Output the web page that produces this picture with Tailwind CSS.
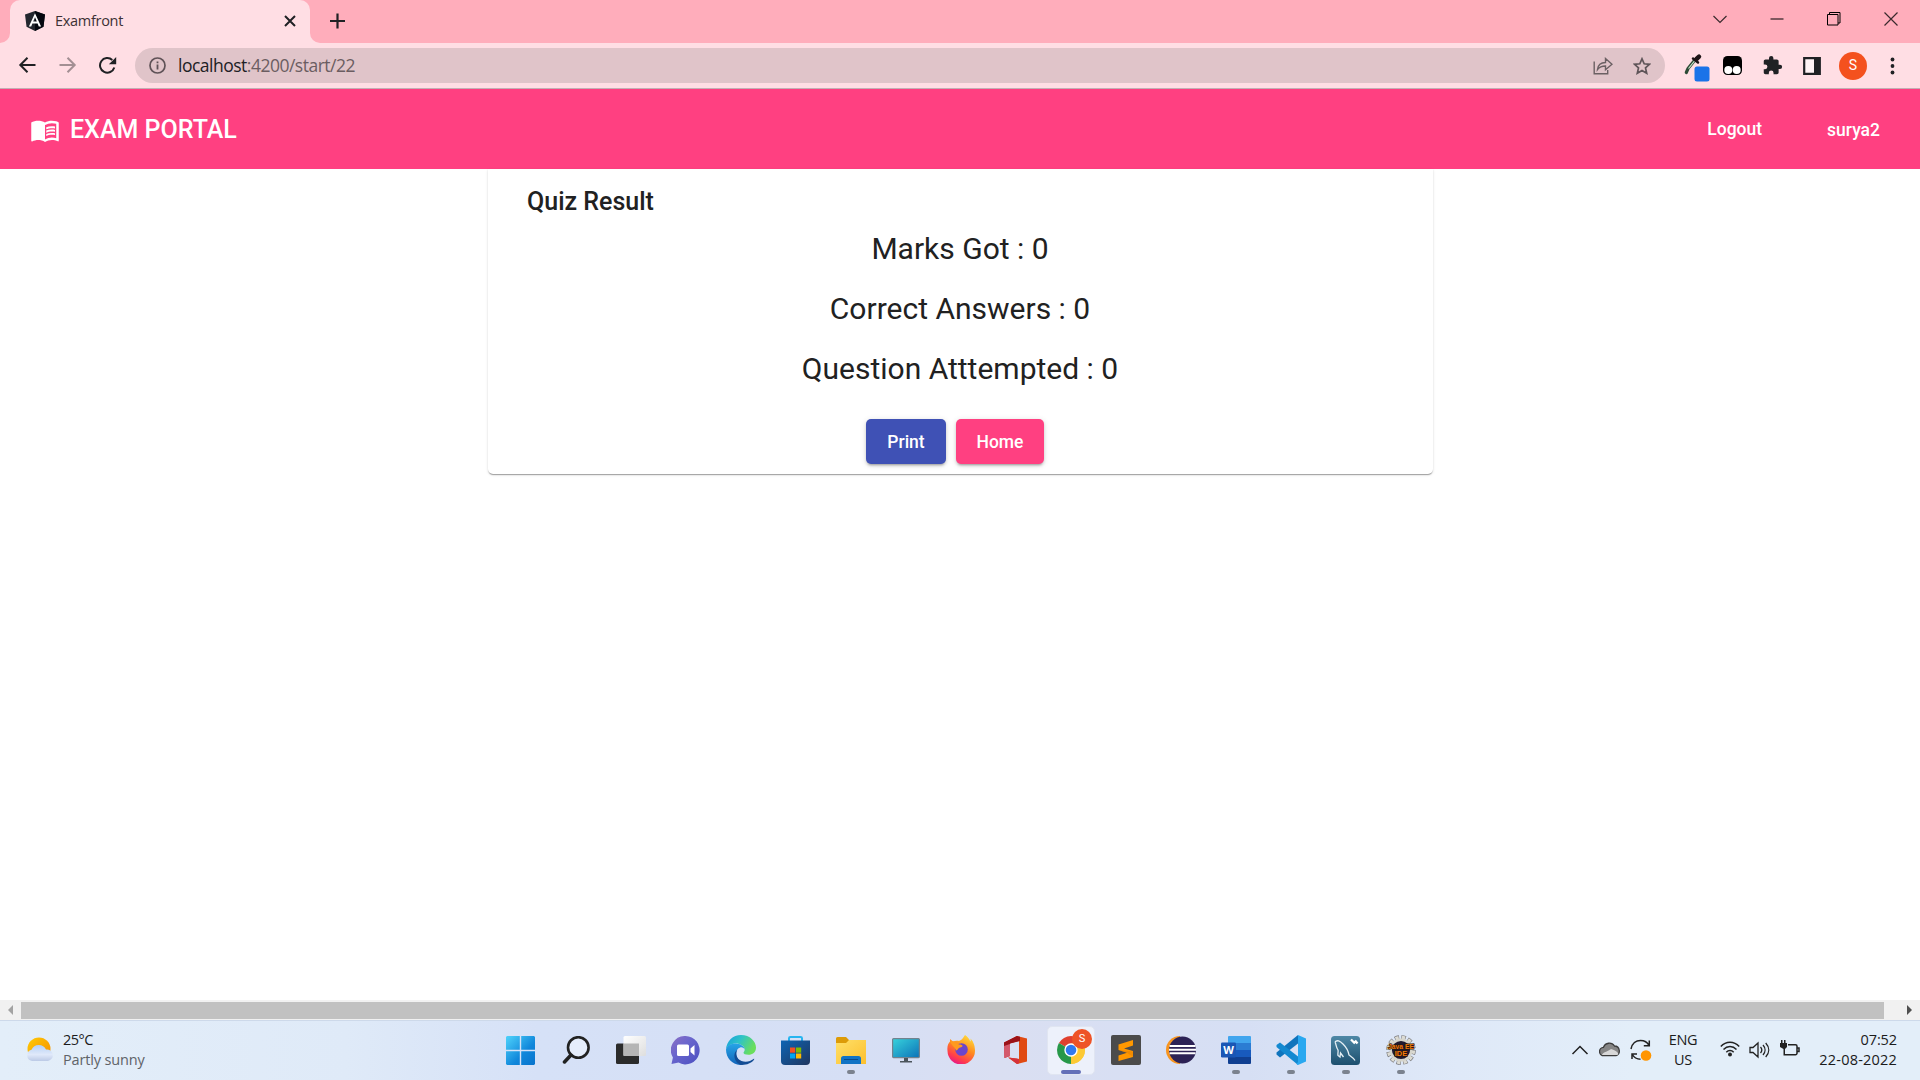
<!DOCTYPE html>
<html lang="en">
<head>
<meta charset="utf-8">
<title>Examfront</title>
<script src="https://cdn.jsdelivr.net/npm/@tailwindcss/browser@4"></script>
</head>
<body class="w-[1920px] h-[1080px] overflow-hidden flex flex-col bg-white font-['Open_Sans','Noto_Sans',sans-serif]">

<!-- Tab strip -->
<div class="h-[43px] shrink-0 bg-[#ffadbb] flex">
  <svg class="w-[10px] h-[43px] shrink-0" viewBox="0 0 10 43"><path d="M10 33v10H0A10 10 0 0 0 10 33z" fill="#ffdee4"/></svg>
  <div class="w-[300px] h-[43px] shrink-0 bg-[#ffdee4] rounded-t-[10px] flex items-center pl-[15px] pr-[14px]">
    <svg class="w-5 h-5 shrink-0 mb-[1px]" viewBox="0 0 20 20"><path d="M10 0l10 3.400-1.500 12.400L10 20l-8.500-4.200L0 3.400z" fill="#23262e"/><path d="M10 0l10 3.400-1.500 12.400L10 20z" fill="#05070f"/><path d="M10 2.200L3.900 15.500h2.300l1.200-3h5.200l1.200 3h2.300zm1.800 8.400H8.200L10 6.300z" fill="#fff"/></svg>
    <span class="ml-[10px] mb-[2px] text-[14.500px] tracking-[-0.3px] text-[#3c3134] grow">Examfront</span>
    <svg class="w-[12px] h-[12px] mb-[1px]" viewBox="0 0 12 12" stroke="#202124" stroke-width="2"><path d="M1 1l10 10M11 1L1 11"/></svg>
  </div>
  <svg class="w-[10px] h-[43px] shrink-0" viewBox="0 0 10 43"><path d="M0 33v10h10A10 10 0 0 1 0 33z" fill="#ffdee4"/></svg>
  <svg class="w-4 h-4 ml-[9px] mt-[13px]" viewBox="0 0 16 16" stroke="#202124" stroke-width="2.200"><path d="M8.500 .5v15M1 8h15"/></svg>
  <div class="ml-auto flex h-[37px] items-center pr-[22px] gap-[43px]">
    <svg class="w-[14px] h-[14px]" viewBox="0 0 14 14" fill="none" stroke="#3a2a2d" stroke-width="1.200"><path d="M.5 4L7 10.500 13.500 4"/></svg>
    <svg class="w-[14px] h-[14px]" viewBox="0 0 14 14"><path d="M.5 6.500h13v1H.5z"/></svg>
    <svg class="w-[14px] h-[14px]" viewBox="0 0 14 14" fill="none" stroke="#000"><path d="M.5 2.500h10.500v10.500H.5zM2.500 2.500V.5h10.500V11h-2"/></svg>
    <svg class="w-[14px] h-[14px]" viewBox="0 0 14 14" fill="none" stroke="#3a2a2d" stroke-width="1.200"><path d="M.5.5l13 13M13.500.5l-13 13"/></svg>
  </div>
</div>

<!-- Browser toolbar -->
<div class="h-[46px] shrink-0 bg-[#ffdee4] border-b border-[#c4aeb4] flex items-center pl-[18px] pr-[19px]">
  <svg class="w-[18px] h-[18px] mb-[1px]" viewBox="0 0 18 18" fill="none" stroke="#202124" stroke-width="2"><path d="M17.500 9H2.500M9.500 1.800L2.300 9l7.200 7.200"/></svg>
  <svg class="w-[18px] h-[18px] ml-[23px] mb-[1px]" viewBox="0 0 18 18" fill="none" stroke="#a38f93" stroke-width="2"><path d="M.5 9h15M8.500 1.800L15.700 9l-7.200 7.200"/></svg>
  <svg class="w-[19px] h-[18px] ml-[21px] mb-[1px]" viewBox="0 0 19 18"><path d="M16.300 11.500A7.300 7.300 0 1 1 14.300 4" fill="none" stroke="#202124" stroke-width="2"/><path d="M18.200 1v7.300h-7.300z" fill="#202124"/></svg>
  <div class="ml-[18px] w-[1530px] h-[35px] rounded-full bg-[#e0c4c9] flex items-center pl-[14px] pr-[14px]">
    <svg class="w-[17px] h-[17px]" viewBox="0 0 17 17"><circle cx="8.500" cy="8.500" r="7.500" fill="none" stroke="#5f5257" stroke-width="1.700"/><path d="M7.600 7.500h1.800v5H7.600zM7.600 4.400h1.800v1.800H7.600z" fill="#5f5257"/></svg>
    <span class="ml-[12px] text-[17.500px] tracking-[-0.5px] text-[#6b5d61]"><span class="text-[#202124]">localhost</span>:4200/start/22</span>
    <svg class="w-5 h-[18px] ml-auto" viewBox="0 0 20 18" fill="none" stroke="#6b6063" stroke-width="1.400"><path d="M1.200 4.500v12.300h13.500V13M4.500 12.500c.5-4.500 3.500-7 8-7V1.500l6.500 5.700-6.500 5.600V9c-3.500 0-6 .8-8 3.500z"/></svg>
    <svg class="w-[18px] h-[18px] ml-[20px]" viewBox="0 0 18 18" fill="none" stroke="#5f5559" stroke-width="1.700"><path d="M9 1.800l2.200 5 5.300.5-4 3.600 1.200 5.300L9 13.400l-4.700 2.800 1.200-5.300-4-3.600 5.300-.5z"/></svg>
  </div>
  <div class="ml-auto flex items-center h-full">
    <svg class="w-[25px] h-[28px] mt-[5px] overflow-visible" viewBox="0 0 25 28"><path d="M9.500 6.500L3 14.500 1.300 18.500" stroke="#2d4a35" stroke-width="3.200" fill="none" stroke-linecap="round"/><path d="M9.500 7L3.500 14.500" stroke="#c9e8cd" stroke-width="1.200"/><path d="M8 4.500l5 4" stroke="#1d1416" stroke-width="2.500" stroke-linecap="round"/><path d="M11.500 5l2.500-2.300" stroke="#1d1416" stroke-width="4.500" stroke-linecap="round"/><rect x="9.500" y="12.500" width="15" height="15" rx="2.500" fill="#1a73e8"/></svg>
    <svg class="w-[19px] h-[19px] ml-[13px]" viewBox="0 0 19 19"><rect width="19" height="19" rx="4.500" fill="#000"/><circle cx="5.300" cy="13.900" r="4" fill="#fff"/><circle cx="13.700" cy="13.900" r="4" fill="#fff"/></svg>
    <svg class="w-[21px] h-[21px] ml-[20px]" viewBox="0 0 24 24" fill="#202124"><path d="M20.500 11H19V7c0-1.100-.9-2-2-2h-4V3.500a2.500 2.500 0 0 0-5 0V5H4c-1.100 0-2 .9-2 2v3.800h1.500a2.700 2.700 0 0 1 0 5.400H2V20c0 1.100.9 2 2 2h3.800v-1.500a2.700 2.700 0 0 1 5.400 0V22H17c1.100 0 2-.9 2-2v-4h1.500a2.500 2.500 0 0 0 0-5z"/></svg>
    <svg class="w-[18px] h-[18px] ml-[20px]" viewBox="0 0 18 18"><path d="M1.200 1.200h15.600v15.600H1.200z" fill="#fff3f5" stroke="#202124" stroke-width="2.200"/><path d="M11 1h6v16h-6z" fill="#202124"/></svg>
    <div class="w-7 h-7 rounded-full bg-[#f4511e] ml-[18px] text-white text-[14px] flex items-center justify-center font-['Roboto',sans-serif]">S</div>
    <svg class="w-4 h-[18px] ml-[18px]" viewBox="0 0 16 18" fill="#202124"><circle cx="7.500" cy="2.500" r="1.900"/><circle cx="7.500" cy="9" r="1.900"/><circle cx="7.500" cy="15.500" r="1.900"/></svg>
  </div>
</div>

<!-- Application header -->
<header class="h-20 shrink-0 bg-[#ff4081] text-white flex items-center px-[30px] font-['Roboto',sans-serif] font-medium">
  <svg class="w-[30px] h-[30px] mt-[2px]" viewBox="0 0 24 24" fill="#fff"><path d="M21 5c-1.110-.35-2.330-.5-3.500-.5-1.950 0-4.050.4-5.500 1.500-1.450-1.100-3.550-1.500-5.500-1.500S2.450 4.900 1 6v14.650c0 .25.25.5.5.5.1 0 .15-.05.25-.05C3.100 20.450 5.050 20 6.500 20c1.950 0 4.050.4 5.500 1.500 1.350-.85 3.800-1.500 5.500-1.500 1.650 0 3.350.3 4.750 1.050.1.050.15.050.25.050.25 0 .5-.25.5-.5V6c-.6-.45-1.250-.75-2-1zm0 13.500c-1.100-.35-2.300-.5-3.500-.5-1.700 0-4.150.65-5.500 1.500V8c1.350-.85 3.800-1.500 5.500-1.500 1.200 0 2.400.15 3.500.5v11.500z"/><path d="M17.500 10.500c.88 0 1.730.09 2.500.26V9.240c-.79-.15-1.640-.24-2.500-.24-1.700 0-3.240.29-4.500.83v1.660c1.130-.64 2.700-.99 4.500-.99zM13 12.490v1.660c1.130-.64 2.700-.99 4.500-.99.88 0 1.730.09 2.500.26V11.900c-.79-.15-1.640-.24-2.500-.24-1.700 0-3.240.3-4.500.83zM17.500 14.330c-1.700 0-3.240.29-4.500.83v1.660c1.130-.64 2.700-.99 4.500-.99.88 0 1.730.09 2.500.26v-1.520c-.79-.16-1.640-.24-2.500-.24z"/></svg>
  <h1 class="ml-[10px] mt-[2px] text-[25px]">EXAM PORTAL</h1>
  <span class="ml-auto text-[17.500px]">Logout</span>
  <span class="ml-[65px] mr-[10px] mt-[2px] text-[17.500px]">surya2</span>
</header>

<!-- Page -->
<main class="grow flex justify-center items-start font-['Roboto',sans-serif] text-[#212121]">
  <section class="w-[945px] h-[305px] ml-px rounded-b-[5px] shadow-[0_2px_1px_-1px_rgba(0,0,0,0.2),0_1px_1px_0_rgba(0,0,0,0.14),0_1px_3px_0_rgba(0,0,0,0.12)]">
    <h2 class="pt-[17px] pl-[39px] text-[25px] leading-8 font-medium">Quiz Result</h2>
    <div class="mt-[11px] pr-px text-center text-[30px] leading-10 flex flex-col gap-5">
      <p>Marks Got : 0</p>
      <p>Correct Answers : 0</p>
      <p>Question Atttempted : 0</p>
    </div>
    <div class="mt-[30px] flex justify-center gap-[10px] pr-[11px] text-white text-[17.500px] font-medium">
      <button class="w-20 h-[45px] pt-[2px] rounded-[5px] bg-[#3f51b5] shadow-[0_3px_2px_-2px_rgba(0,0,0,0.2),0_2px_3px_0_rgba(0,0,0,0.14),0_1px_6px_0_rgba(0,0,0,0.12)]">Print</button>
      <button class="w-[88px] h-[45px] pt-[2px] rounded-[5px] bg-[#ff4081] shadow-[0_3px_2px_-2px_rgba(0,0,0,0.2),0_2px_3px_0_rgba(0,0,0,0.14),0_1px_6px_0_rgba(0,0,0,0.12)]">Home</button>
    </div>
  </section>
</main>

<!-- Horizontal scrollbar -->
<div class="h-5 shrink-0 bg-[#f1f1f1] flex items-center justify-between px-2">
  <svg class="w-[5px] h-[10px]" viewBox="0 0 5 10"><path d="M5 0v10L0 5z" fill="#a3a3a3"/></svg>
  <div class="w-[1863px] h-[17px] mt-[1px] bg-[#c1c1c1] ml-2 mr-auto"></div>
  <svg class="w-[5px] h-[10px]" viewBox="0 0 5 10"><path d="M0 0v10l5-5z" fill="#505050"/></svg>
</div>

<!-- Taskbar -->
<footer class="h-[60px] shrink-0 border-t border-[#cdd9ea] bg-[linear-gradient(90deg,#e3eef9_0%,#dfeaf8_18%,#d6e1f7_28%,#d6dff5_45%,#dadff2_52%,#d6dff4_65%,#dfe9f8_76%,#e3eef9_85%)] flex items-center">
  <div class="w-[493px] flex items-center pl-[26px] pb-[1px] text-[14.500px] leading-5">
    <svg class="w-7 h-[26px] mb-[3px]" viewBox="0 0 28 26"><defs><linearGradient id="sun" x1="0" y1="0" x2="1" y2="1"><stop offset="0" stop-color="#ffcb05"/><stop offset="1" stop-color="#f58b00"/></linearGradient><linearGradient id="cloud" x1="0" y1="0" x2="0" y2="1"><stop offset="0" stop-color="#b4d0f5"/><stop offset=".6" stop-color="#e0e9fa"/><stop offset="1" stop-color="#bccae6"/></linearGradient></defs><circle cx="13" cy="13" r="11.500" fill="url(#sun)"/><path d="M6 25a5.800 5.800 0 0 1-.5-11.300A8 8 0 0 1 20 13.500 5.800 5.800 0 0 1 22 25z" fill="url(#cloud)"/></svg>
    <div class="ml-[9px]"><p class="text-[#1b1b1b] tracking-[-0.5px]">25°C</p><p class="text-[#5f6368] tracking-[-0.15px]">Partly sunny</p></div>
  </div>

  <nav class="flex h-full w-[935px]">
    <div class="w-[55px] pb-px relative flex items-center justify-center"><svg class="w-[29px] h-[29px]" viewBox="0 0 29 29"><defs><linearGradient id="win" x1="0" y1="0" x2="1" y2="1"><stop offset="0" stop-color="#4fd3fb"/><stop offset=".6" stop-color="#1087db"/><stop offset="1" stop-color="#0873cc"/></linearGradient></defs><path d="M1 0h12.800v13.800H0V1zM15.200 0H28l1 1v12.800H15.200zM0 15.200h13.800V29H1l-1-1zM15.200 15.200H29V28l-1 1H15.200z" fill="url(#win)"/></svg></div>

    <div class="w-[55px] pb-px relative flex items-center justify-center"><svg class="w-7 h-7" viewBox="0 0 28 28" fill="none" stroke="#222" stroke-linecap="round"><circle cx="16.300" cy="11.500" r="10.300" stroke-width="2.600" fill="#e5edfb"/><path d="M9 19l-6.500 7" stroke-width="3.500"/></svg></div>

    <div class="w-[55px] pb-px relative flex items-center justify-center"><svg class="w-[30px] h-[28px]" viewBox="0 0 30 28"><defs><linearGradient id="tv" x1="0" y1="0" x2="1" y2="1"><stop offset="0" stop-color="#fff"/><stop offset="1" stop-color="#dedede"/></linearGradient></defs><rect y="7.500" width="23" height="20.500" rx="1.500" fill="#2b2b2b"/><rect x="7.500" width="22.500" height="20" rx="1.500" fill="url(#tv)"/><path d="M7.500 7.500H23V20H7.500z" fill="#b5b5b5"/></svg></div>

    <div class="w-[55px] pb-px relative flex items-center justify-center"><svg class="w-[29px] h-[29px]" viewBox="0 0 29 29"><defs><linearGradient id="chat" x1="0" y1="0" x2="1" y2="1"><stop offset="0" stop-color="#8d6fc4"/><stop offset=".4" stop-color="#6a66cd"/><stop offset="1" stop-color="#4b4fc0"/></linearGradient></defs><path d="M14.500 0a14.200 14.200 0 1 1-7 26.600L.5 28l1.400-6.500A14.200 14.200 0 0 1 14.500 0z" fill="url(#chat)"/><rect x="6" y="8.500" width="12" height="11.500" rx="1.500" fill="#fff"/><path d="M19.500 12.500l4-3.500v10.500l-4-3.500z" fill="#fff"/></svg></div>

    <div class="w-[55px] pb-px relative flex items-center justify-center"><svg class="w-[30px] h-[30px]" viewBox="0 0 30 30"><defs><linearGradient id="ed1" x1="0" y1="0" x2="1" y2=".4"><stop offset="0" stop-color="#159ee0"/><stop offset=".5" stop-color="#2fc3c6"/><stop offset="1" stop-color="#6ade5c"/></linearGradient><linearGradient id="ed2" x1="0" y1="0" x2="0" y2="1"><stop offset="0" stop-color="#27a5e8"/><stop offset="1" stop-color="#1263b8"/></linearGradient></defs><path d="M0 14.500C.5 6 7 0 15 0c9 0 15 6.500 15 12.500 0 5-3.500 7.300-7.500 7.300-3.300 0-5-1-5-2 0-.8 1.200-1.300 1.200-3.300C18.700 11 14 8.500 10 8.500 5 8.500 1.500 11 0 14.500z" fill="url(#ed1)"/><path d="M0 14.500c1-4 5-6 9.500-6 5 0 9.200 3 9.200 6-1-2-3-2.500-4.500-2-3 1-4.700 4-3.700 8C11.500 25 16 29.500 16 30 7 30.500 0 23.500 0 14.500z" fill="url(#ed2)"/><path d="M11.500 14.500c-2.500 4-1 9.500 4 11.500 4.500 1.800 9 .3 12-2 .8-.5 1 0 .5.8C25.500 28 21 30 16 30 9 29 5.500 19 11.500 14.500z" fill="#134c94"/></svg></div>

    <div class="w-[55px] pb-px relative flex items-center justify-center"><svg class="w-[29px] h-[30px]" viewBox="0 0 29 30"><defs><linearGradient id="store" x1="0" y1="0" x2="1" y2="1"><stop offset="0" stop-color="#0d64b4"/><stop offset="1" stop-color="#20365f"/></linearGradient></defs><path d="M8 6V3.300C8 2.300 8.700 2 9.500 2h10c1 0 1.500.5 1.500 1.300V6" fill="none" stroke="#27b5f0" stroke-width="2"/><path d="M0 5.500h29V26a4 4 0 0 1-4 4H4a4 4 0 0 1-4-4z" fill="url(#store)"/><path d="M9 12.500h5.200v5.200H9z" fill="#f25022"/><path d="M15 12.500h5.200v5.200H15z" fill="#7fba00"/><path d="M9 18.500h5.200v5H9z" fill="#00a4ef"/><path d="M15 18.500h5.200v5H15z" fill="#ffb900"/></svg></div>

    <div class="w-[55px] pb-px relative flex items-center justify-center"><svg class="w-[30px] h-[27px]" viewBox="0 0 30 27"><defs><linearGradient id="fold" x1="0" y1="0" x2="1" y2="1"><stop offset="0" stop-color="#ffe069"/><stop offset="1" stop-color="#fcbf2d"/></linearGradient></defs><path d="M0 1.500A1.500 1.500 0 0 1 1.500 0H10l3 3h16v6H0z" fill="#dd9b08"/><path d="M0 6h10l3-3h17v24H0z" fill="url(#fold)"/><path d="M5 27v-5.500a2.500 2.500 0 0 1 2.500-2.500h15a2.500 2.500 0 0 1 2.500 2.500V27z" fill="#1173c5"/><path d="M8 22.500h14" stroke="#0a4a8b"/></svg><i class="absolute bottom-[6px] w-2 h-1 rounded-full bg-[#7b828e]"></i></div>

    <div class="w-[55px] pb-px relative flex items-center justify-center"><svg class="w-7 h-[26px]" viewBox="0 0 28 26"><defs><linearGradient id="pc" x1="0" y1="0" x2="1" y2="1"><stop offset="0" stop-color="#37d3dc"/><stop offset="1" stop-color="#0c72b8"/></linearGradient></defs><rect x=".6" y="1.600" width="26.800" height="19" rx="1" fill="url(#pc)" stroke="#72828e" stroke-width="1.200"/><path d="M12 21h4v3h4v1.500H8V24h4z" fill="#4c555c"/></svg></div>

    <div class="w-[55px] pb-[3px] relative flex items-center justify-center"><svg class="w-[28px] h-[29px]" viewBox="0 0 28 29"><defs><linearGradient id="fx" x1=".8" y1="0" x2=".3" y2="1"><stop offset="0" stop-color="#ffe13d"/><stop offset=".45" stop-color="#ff8a1e"/><stop offset=".8" stop-color="#ff3b4d"/><stop offset="1" stop-color="#e3178d"/></linearGradient></defs><path d="M18 0c4 3 4.500 5 5.500 6.500C24 5 23.500 4 23.500 3.500 27 7 28 12 28 15.500A13.700 13.700 0 0 1 .5 16C0 11.500 1 8.500 3 6.500V4l3 2.500c2-.8 4-1 6-.5 2-.5 4-2.500 6-6z" fill="url(#fx)"/><circle cx="14.500" cy="14.500" r="6.300" fill="#6c45cc"/><path d="M3 6.500C7 5.500 10 8 12 9.500c2 0 3.500.5 3.500 1.500s-2.500 1.500-3.500 2-1 2-3 2.500C8 12 5 11 3 6.500z" fill="#ff9a1f"/></svg></div>

    <div class="w-[55px] pb-px relative flex items-center justify-center"><svg class="w-[23px] h-[28px]" viewBox="0 0 23 28"><path d="M0 6.500L13 0v5L6 7.500V20L.5 22z" fill="#c3232a"/><path d="M13 0l10 2.500v23L13 28l-9-6.500 11 1.500V5L9 6.500 6 4z" fill="#e04a12"/><path d="M4.500 21.500L15 23v4.300l-2 .7z" fill="#d5323b"/><path d="M0 6.500L13 0l3 .7V5L6 7.500V10H0z" fill="#9b1218"/><path d="M0 10l6-2v12L.3 22z" fill="#d4596b"/></svg></div>

    <div class="w-[55px] pb-px relative flex items-center justify-center"><div class="w-12 h-[49px] rounded-[5px] bg-[#edf1fb] border border-[#e0e5f1] flex items-center justify-center"><svg class="w-[28px] h-[28px]" viewBox="0 0 28 28"><path d="M14 14L1.900 7A14 14 0 0 1 26.100 7z" fill="#e0402f"/><path d="M14 14l12.100-7A14 14 0 0 1 14 28z" fill="#fcc934"/><path d="M14 14v14l6-10.500L14 28A14 14 0 0 1 1.900 7z" fill="#279849"/><path d="M14 7.500h12.400A14 14 0 0 1 14 28l5.600-10.700z" fill="#fcc934"/><circle cx="14" cy="14" r="6.700" fill="#fff"/><circle cx="14" cy="14" r="5.300" fill="#3079ef"/></svg></div><b class="absolute left-[29px] top-[8px] w-[20px] h-[20px] rounded-full bg-[#ee5326] text-[11px] font-normal text-white flex items-center justify-center font-['Roboto',sans-serif]">S</b><i class="absolute bottom-[6px] w-5 h-1 rounded-full bg-[#6470b8]"></i></div>

    <div class="w-[55px] pb-px relative flex items-center justify-center"><svg class="w-[30px] h-[30px]" viewBox="0 0 30 30"><rect width="30" height="30" rx="2" fill="#4b4b4b"/><path d="M22 5v5.500l-9 3L22 16v6L7.500 26v-5.500l8.500-2.700-8.500-2.800V9.500z" fill="#ff9800"/><path d="M7.500 15l14.500 1.500V22l-6-4.200z" fill="#e27d00" opacity=".5"/></svg></div>

    <div class="w-[55px] pb-px relative flex items-center justify-center"><svg class="w-[30px] h-[28px]" viewBox="0 0 30 28"><path d="M14 0a14 14 0 0 0 0 28z" fill="#f7941e"/><circle cx="16.500" cy="14" r="13.500" fill="#2c2255"/><path d="M3.500 10h26M3 13.700h27M3.500 17.300h26" stroke="#fff" stroke-width="1.900"/></svg></div>

    <div class="w-[55px] pb-px relative flex items-center justify-center"><svg class="w-[30px] h-7" viewBox="0 0 30 28"><path d="M7 1a1 1 0 0 1 1-1h21a1 1 0 0 1 1 1v6H7z" fill="#41a5ee"/><path d="M7 7h23v7H7z" fill="#2b7cd3"/><path d="M7 14h23v7H7z" fill="#185abd"/><path d="M7 21h23v6a1 1 0 0 1-1 1H8a1 1 0 0 1-1-1z" fill="#103f91"/><rect y="6.500" width="15" height="15" rx="1.300" fill="#1a56b5"/><text x="7.500" y="18" font-size="11" font-weight="700" text-anchor="middle" fill="#fff" font-family="Open Sans">W</text></svg><i class="absolute bottom-[6px] w-2 h-1 rounded-full bg-[#7b828e]"></i></div>

    <div class="w-[55px] pb-px relative flex items-center justify-center"><svg class="w-[30px] h-[30px]" viewBox="0 0 30 30"><path d="M22 0v8.500L4 22.500l-3.500-3v-2z" fill="#0f74bd"/><path d="M4 7.500l18 14V30L.5 12v-2z" fill="#1389d1"/><path d="M22 0l8 3.500v23L22 30l-1.500-1L22 27z" fill="#29a8f0"/></svg><i class="absolute bottom-[6px] w-2 h-1 rounded-full bg-[#7b828e]"></i></div>

    <div class="w-[55px] pb-px relative flex items-center justify-center"><svg class="w-[29px] h-[29px]" viewBox="0 0 29 29"><defs><linearGradient id="sql" x1="0" y1="0" x2="0" y2="1"><stop offset="0" stop-color="#4e88a6"/><stop offset="1" stop-color="#1c4f6e"/></linearGradient></defs><rect width="29" height="29" rx="3.500" fill="url(#sql)"/><path d="M4 6c2-2.500 5-1 8 2 4 4 5.500 8 6 11 2 1.500 4.500 3 6 5.500M4 6c1.500 3 1 5 3 8 .5 2-.5 3 0 5.500l2 1.500.5-4 3 4" fill="none" stroke="#e6f0f5" stroke-width="1.300"/><path d="M20 3.500l4 4M24 4.500l2.500 3" stroke="#fff" stroke-width="2.300"/></svg><i class="absolute bottom-[6px] w-2 h-1 rounded-full bg-[#7b828e]"></i></div>

    <div class="w-[55px] pb-px relative flex items-center justify-center"><svg class="w-[30px] h-[30px]" viewBox="0 0 30 30"><circle cx="15" cy="15" r="12.500" fill="none" stroke="#77777a" stroke-width="4.600" stroke-dasharray="4.300 2.245"/><circle cx="15" cy="15" r="12.500" fill="none" stroke="#dcdbd3" stroke-width="3.400" stroke-dasharray="3.300 3.245" stroke-dashoffset="-.5"/><circle cx="15" cy="15" r="10.300" fill="#211a30" stroke="#d6d5cc" stroke-width="2.400"/><text x="15" y="14" font-size="7.500" font-weight="700" text-anchor="middle" fill="#f07a10" stroke="#2b1505" stroke-width="1.200" paint-order="stroke" font-family="Liberation Sans" textLength="26" lengthAdjust="spacingAndGlyphs">Java EE</text><text x="15" y="21" font-size="7.500" font-weight="700" text-anchor="middle" fill="#f07a10" stroke="#2b1505" stroke-width="1.200" paint-order="stroke" font-family="Liberation Sans">IDE</text></svg><i class="absolute bottom-[6px] w-2 h-1 rounded-full bg-[#7b828e]"></i></div>
  </nav>

  <!-- System tray -->
  <div class="grow flex items-center pl-[143px] pr-[23px] pb-[1px] text-[14.500px] leading-5 text-[#1b1b1b]">
    <svg class="w-[18px] h-[18px]" viewBox="0 0 18 18" fill="none" stroke="#222" stroke-width="1.500"><path d="M1.500 13L9 5.500l7.500 7.500"/></svg>
    <svg class="w-[22px] h-4 ml-[10px] mb-[2px]" viewBox="0 0 22 16"><path d="M5 14.700a4.200 4.200 0 0 1-.5-8.400A6.200 6.200 0 0 1 15.500 5a5 5 0 0 1 1.500 9.700z" fill="#858585" stroke="#3b3b3b" stroke-width="1.300"/><path d="M3 14c1-3 5-3 9-6 3 1 6 2 7.500 5-1 1-1.500 1-2.500 1z" fill="#d8d8d8"/></svg>
    <svg class="w-[22px] h-[22px] ml-[9px]" viewBox="0 0 22 22" fill="none" stroke="#222" stroke-width="1.500"><path d="M1 10C2 4.500 6 1.500 10.500 1.500c4 0 7 2 8.500 5M19.300 1.500v5.300h-5.500M2 20v-5h5M2 15c2 3.500 5 5.300 8.500 5.300"/><circle cx="16" cy="16.500" r="5.300" fill="#ff9500" stroke="none"/></svg>
    <div class="ml-[14px] w-[34px] text-center tracking-[-0.3px]"><p>ENG</p><p>US</p></div>
    <svg class="w-5 h-4 ml-[20px] mb-[2px]" viewBox="0 0 20 16" fill="none" stroke="#222" stroke-width="1.500"><path d="M.8 5.500C6-.2 14-.2 19.200 5.500M3.500 8.500c3.800-4 9.200-4 13 0M6.300 11.300c2.200-2.300 5.200-2.300 7.400 0"/><circle cx="10" cy="13.500" r="2" fill="#222" stroke="none"/></svg>
    <svg class="w-[21px] h-[18px] ml-[9px]" viewBox="0 0 21 18" fill="none" stroke="#222" stroke-width="1.300"><path d="M1 6.500h3l5-4.500v14l-5-4.500H1zM11.500 6c1.500 1.700 1.500 4.300 0 6M14 4c2.700 3 2.700 7 0 10M16.700 2c4 4.300 4 9.700 0 14"/></svg>
    <svg class="w-[21px] h-[18px] ml-[9px] mb-[2px]" viewBox="0 0 21 18"><path d="M2 0h1.500v3H5V0h1.500v3H8v4L6 9v5H4.500V9L1 7V3h1z" fill="#222"/><path d="M9 4.700h7.500a1.500 1.500 0 0 1 1.500 1.500v7a1.500 1.500 0 0 1-1.500 1.500H4.500M18.500 8h1.500v3.500h-1.500" fill="none" stroke="#222" stroke-width="1.500"/></svg>
    <div class="ml-auto text-right tracking-[0.2px]"><p class="tracking-[-0.1px]">07:52</p><p>22-08-2022</p></div>
  </div>
</footer>
</body>
</html>
